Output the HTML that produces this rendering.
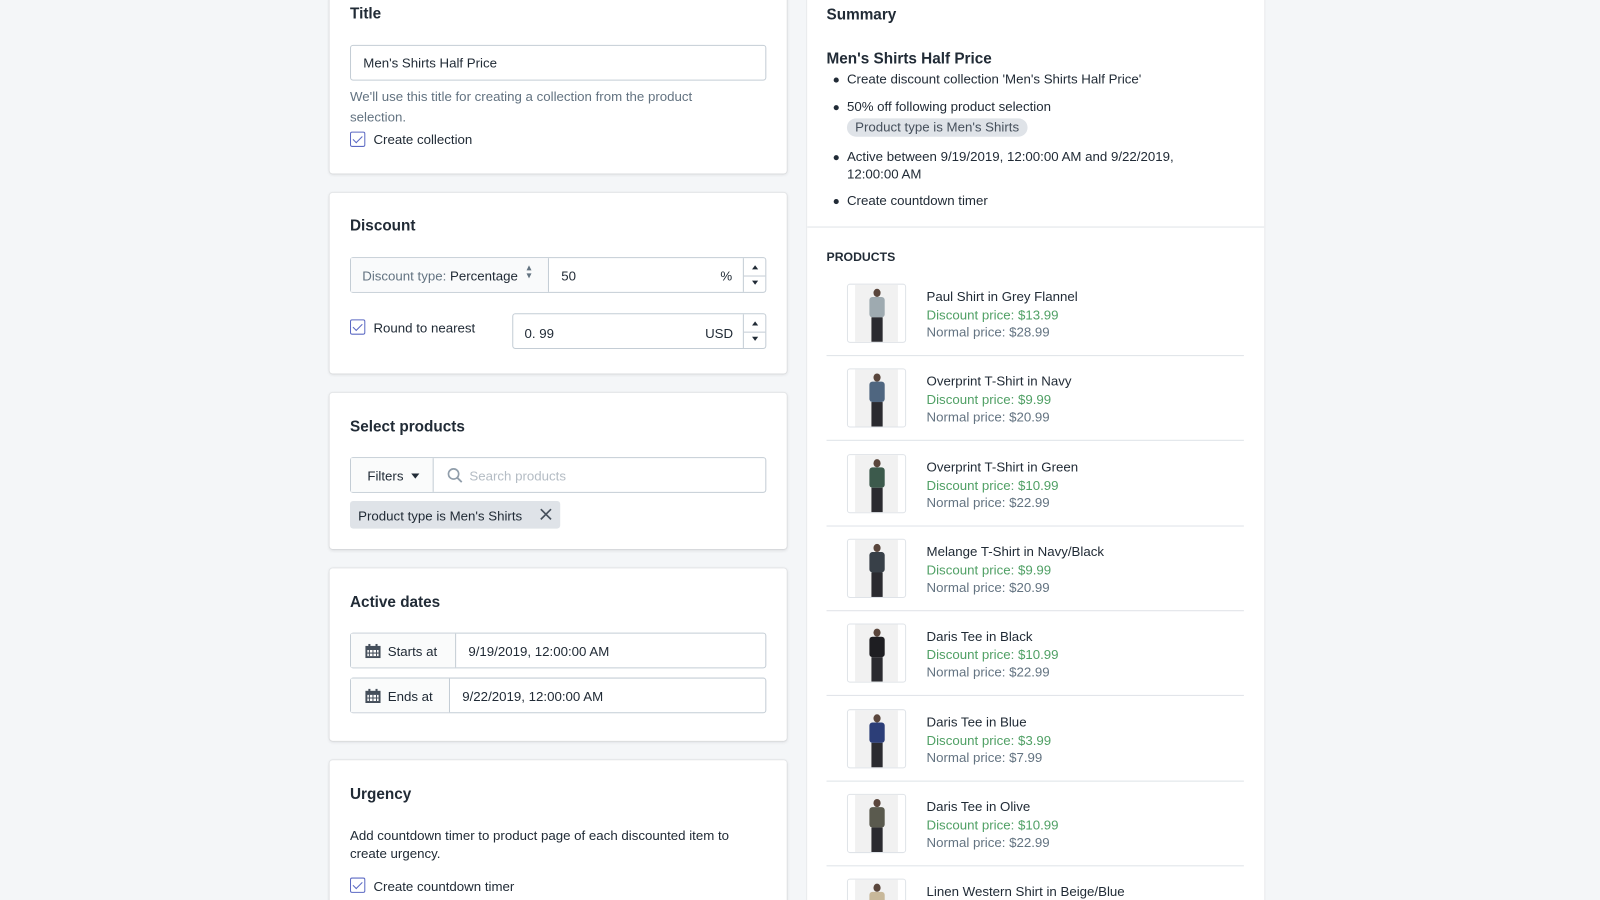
<!DOCTYPE html>
<html><head><meta charset="utf-8"><style>
*{box-sizing:border-box;margin:0;padding:0}
html,body{width:1600px;height:900px;overflow:hidden;background:#f4f6f8}
#w{position:absolute;left:0;top:0;width:1568px;height:882px;overflow:hidden;transform:scale(1.02041);transform-origin:0 0;font-family:"Liberation Sans",sans-serif;font-size:13px;color:#212b36}
.card{position:absolute;left:323px;width:448px;background:#fff;border-radius:3px;box-shadow:0 0 0 1px rgba(63,63,68,.05),0 1px 3px rgba(63,63,68,.15)}
.abs{position:absolute}
h2{position:absolute;left:20px;font-size:15px;font-weight:bold;color:#212b36}
.inp{position:absolute;border:1px solid #c4cdd5;border-radius:3px;background:#fff;height:35px}
.cb{position:absolute;width:15px;height:15px;border:1px solid #5c6ac4;border-radius:2px;background:#fff}
.cb:after{content:"";position:absolute;left:4px;top:1px;width:4px;height:8px;border:solid #5c6ac4;border-width:0 1.5px 1.5px 0;transform:rotate(45deg)}
.t{position:absolute;white-space:nowrap}
.g{color:#637381}
.spin{position:absolute;right:0;top:0;width:22px;height:100%;border-left:1px solid #c4cdd5}
.spin:before{content:"";position:absolute;left:0;right:0;top:50%;border-top:1px solid #c4cdd5}
.up,.dn{position:absolute;left:8px;width:0;height:0;border-left:3px solid transparent;border-right:3px solid transparent}
.up{top:7px;border-bottom:4px solid #212b36}.dn{bottom:7px;border-top:4px solid #212b36}
#rp{position:absolute;left:791px;top:0;width:448px;height:882px;overflow:hidden;background:#fff;box-shadow:0 0 0 1px rgba(63,63,68,.06)}
.prod{position:absolute;left:19px;width:409px;height:71px;border-bottom:1px solid #dfe3e8}
.img{position:absolute;left:20px;top:0;width:58px;height:58px;border:1px solid #dfe3e8;border-radius:3px;background:#fff;overflow:hidden}
.img i{position:absolute;left:7px;top:0;width:42px;height:58px;background:#f1f1f1}
.img b{position:absolute;left:25px;top:4px;width:7px;height:8px;border-radius:50%;background:#5a463c}
.img u{position:absolute;left:21px;top:12px;width:15px;height:20px;border-radius:3px}
.img s{position:absolute;left:23px;top:32px;width:11px;height:24px;background:#2b2b30}
.pn{position:absolute;left:98px;top:4px;line-height:17.5px}
.pn div:nth-child(2){color:#50a065}.pn div:nth-child(3){color:#637381}
li{list-style:none;position:relative;padding-left:20px;line-height:17.5px}
li:before{content:"";position:absolute;left:7px;top:7px;width:5px;height:5px;border-radius:50%;background:#212b36}
</style></head><body><div id="w">

<div class="card" style="top:-5px;height:175px">
<h2 style="top:10px">Title</h2>
<div class="inp" style="left:20px;top:49px;width:408px"><span class="t" style="left:12px;top:9px">Men's Shirts Half Price</span></div>
<div class="t g" style="left:20px;top:90px;line-height:19.5px;white-space:normal;width:380px">We'll use this title for creating a collection from the product selection.</div>
<div class="cb" style="left:20px;top:134px"></div><span class="t" style="left:43px;top:134px">Create collection</span>
</div>

<div class="card" style="top:189px;height:177px">
<h2 style="top:24px">Discount</h2>
<div class="inp" style="left:20px;top:63px;width:408px">
<div class="abs" style="left:0;top:0;width:194px;height:33px;background:#f9fafb;border-right:1px solid #c4cdd5"></div>
<span class="t" style="left:11px;top:10px"><span class="g">Discount type:</span> Percentage</span>
<span class="t g" style="left:172px;top:6px;font-size:10px;line-height:8px">▴<br>▾</span>
<span class="t" style="left:206px;top:10px">50</span><span class="t" style="left:362px;top:10px">%</span>
<div class="spin"><i class="up"></i><i class="dn"></i></div></div>
<div class="cb" style="left:20px;top:124px"></div><span class="t" style="left:43px;top:125px">Round to nearest</span>
<div class="inp" style="left:179px;top:118px;width:249px"><span class="t" style="left:11px;top:11px">0. 99</span><span class="t" style="left:188px;top:11px">USD</span><div class="spin"><i class="up"></i><i class="dn"></i></div></div>
</div>

<div class="card" style="top:385px;height:153px">
<h2 style="top:25px">Select products</h2>
<div class="inp" style="left:20px;top:63px;width:408px">
<div class="abs" style="left:0;top:0;width:81px;height:33px;border-right:1px solid #c4cdd5;background:#fafbfb"></div>
<span class="t" style="left:16px;top:10px">Filters</span>
<span class="abs" style="left:59px;top:15px;border-left:4px solid transparent;border-right:4px solid transparent;border-top:5px solid #212b36"></span>
<svg class="abs" style="left:94px;top:9px" width="16" height="16" viewBox="0 0 16 16"><circle cx="6.5" cy="6.5" r="5" fill="none" stroke="#919eab" stroke-width="1.6"/><path d="M10 10l4.5 4.5" stroke="#919eab" stroke-width="1.8"/></svg>
<span class="t" style="left:116px;top:10px;color:#b4bcc4">Search products</span></div>
<div class="abs" style="left:20px;top:106px;width:206px;height:27px;background:#dfe3e8;border-radius:3px"></div>
<span class="t" style="left:28px;top:113px">Product type is Men's Shirts</span>
<svg class="abs" style="left:206px;top:113px" width="12" height="12"><path d="M1 1l10 10M11 1L1 11" stroke="#454f5b" stroke-width="1.6"/></svg>
</div>

<div class="card" style="top:557px;height:169px">
<h2 style="top:25px">Active dates</h2>
<div class="inp" style="left:20px;top:63px;width:408px"><div class="abs" style="left:0;top:0;width:103px;height:33px;background:#fafbfb;border-right:1px solid #c4cdd5"></div>
<svg class="abs" style="left:14px;top:10px" width="15" height="14"><rect x="0" y="2" width="15" height="12" fill="#454f5b"/><rect x="2" y="6" width="11" height="6" fill="#fff"/><path d="M4 6v6M7.5 6v6M11 6v6M2 9h11" stroke="#454f5b" stroke-width="1"/><rect x="3" y="0" width="2" height="3" fill="#454f5b"/><rect x="10" y="0" width="2" height="3" fill="#454f5b"/></svg>
<span class="t" style="left:36px;top:10px">Starts at</span><span class="t" style="left:115px;top:10px">9/19/2019, 12:00:00 AM</span></div>
<div class="inp" style="left:20px;top:107px;width:408px"><div class="abs" style="left:0;top:0;width:97px;height:33px;background:#fafbfb;border-right:1px solid #c4cdd5"></div>
<svg class="abs" style="left:14px;top:10px" width="15" height="14"><rect x="0" y="2" width="15" height="12" fill="#454f5b"/><rect x="2" y="6" width="11" height="6" fill="#fff"/><path d="M4 6v6M7.5 6v6M11 6v6M2 9h11" stroke="#454f5b" stroke-width="1"/><rect x="3" y="0" width="2" height="3" fill="#454f5b"/><rect x="10" y="0" width="2" height="3" fill="#454f5b"/></svg>
<span class="t" style="left:36px;top:10px">Ends at</span><span class="t" style="left:109px;top:10px">9/22/2019, 12:00:00 AM</span></div>
</div>

<div class="card" style="top:745px;height:160px">
<h2 style="top:25px">Urgency</h2>
<div class="t" style="left:20px;top:65px;line-height:18px;white-space:normal;width:410px">Add countdown timer to product page of each discounted item to create urgency.</div>
<div class="cb" style="left:20px;top:115px"></div><span class="t" style="left:43px;top:116px">Create countdown timer</span>
</div>

<div id="rp">
<h2 style="top:6px;left:19px">Summary</h2>
<div class="t" style="left:19px;top:49px;font-size:15px;font-weight:bold">Men's Shirts Half Price</div>
<ul class="abs" style="left:19px;top:69px;width:375px">
<li>Create discount collection 'Men's Shirts Half Price'</li>
<li style="margin-top:9px">50% off following product selection<br><span style="display:inline-block;background:#dfe3e8;border-radius:10px;padding:0 8px;margin-top:3px;color:#454f5b">Product type is Men's Shirts</span></li>
<li style="margin-top:11px">Active between 9/19/2019, 12:00:00 AM and 9/22/2019, 12:00:00 AM</li>
<li style="margin-top:8px">Create countdown timer</li>
</ul>
<div class="abs" style="left:0;top:222px;width:448px;border-top:1px solid #dfe3e8"></div>
<div class="t" style="left:19px;top:245px;font-size:12px;font-weight:bold">PRODUCTS</div>

<div class="prod" style="top:278px"><div class="img"><i></i><b></b><u style="background:#9eaab0"></u><s></s></div><div class="pn"><div>Paul Shirt in Grey Flannel</div><div>Discount price: $13.99</div><div>Normal price: $28.99</div></div></div>
<div class="prod" style="top:361px"><div class="img"><i></i><b></b><u style="background:#4f6680"></u><s></s></div><div class="pn"><div>Overprint T-Shirt in Navy</div><div>Discount price: $9.99</div><div>Normal price: $20.99</div></div></div>
<div class="prod" style="top:445px"><div class="img"><i></i><b></b><u style="background:#3c5a4c"></u><s></s></div><div class="pn"><div>Overprint T-Shirt in Green</div><div>Discount price: $10.99</div><div>Normal price: $22.99</div></div></div>
<div class="prod" style="top:528px"><div class="img"><i></i><b></b><u style="background:#384048"></u><s></s></div><div class="pn"><div>Melange T-Shirt in Navy/Black</div><div>Discount price: $9.99</div><div>Normal price: $20.99</div></div></div>
<div class="prod" style="top:611px"><div class="img"><i></i><b></b><u style="background:#1e1e22"></u><s></s></div><div class="pn"><div>Daris Tee in Black</div><div>Discount price: $10.99</div><div>Normal price: $22.99</div></div></div>
<div class="prod" style="top:695px"><div class="img"><i></i><b></b><u style="background:#2c3e78"></u><s></s></div><div class="pn"><div>Daris Tee in Blue</div><div>Discount price: $3.99</div><div>Normal price: $7.99</div></div></div>
<div class="prod" style="top:778px"><div class="img"><i></i><b></b><u style="background:#5a5a4e"></u><s></s></div><div class="pn"><div>Daris Tee in Olive</div><div>Discount price: $10.99</div><div>Normal price: $22.99</div></div></div>
<div class="prod" style="top:861px;border:0"><div class="img"><i></i><b></b><u style="background:#c8b89a"></u><s></s></div><div class="pn"><div>Linen Western Shirt in Beige/Blue</div></div></div>
</div>
</div></body></html>
